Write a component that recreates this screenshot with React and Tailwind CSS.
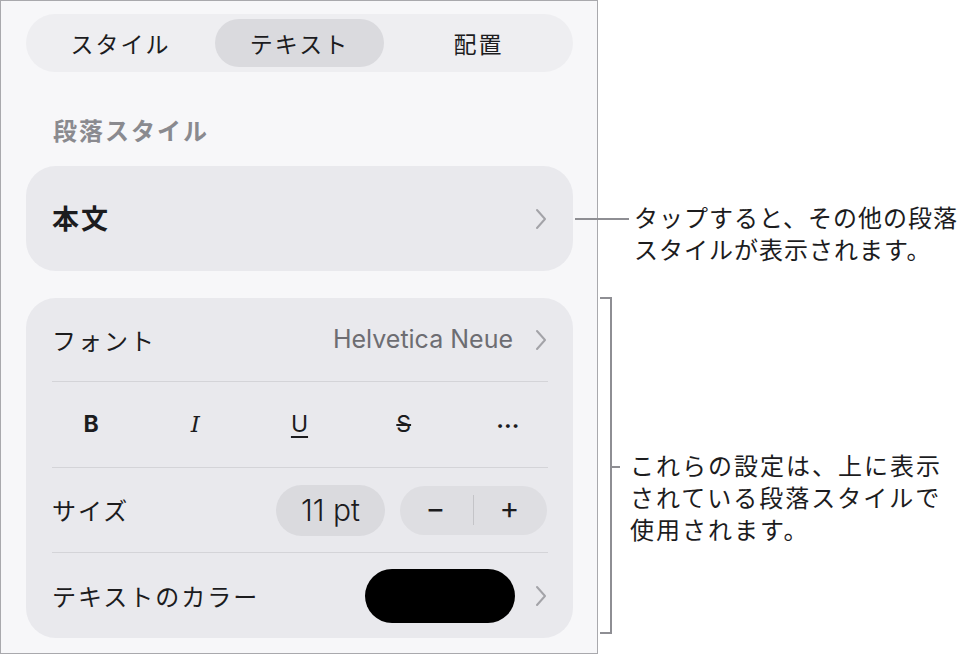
import React from 'react';

const jp = { fontFamily: '"Noto Sans CJK JP", "Noto Sans", sans-serif' };
const latin = { fontFamily: 'Inter, "Noto Sans CJK JP", sans-serif' };

function Chevron() {
  return (
    <svg width="12" height="22" viewBox="0 0 12 22" className="shrink-0">
      <polyline points="2,2 10,11 2,20" fill="none" stroke="#a3a3a8" strokeWidth="2" strokeLinecap="round" strokeLinejoin="round" />
    </svg>
  );
}

function Divider() {
  return <div className="h-px bg-[#d4d4d8] ml-[26px] mr-[25px]" />;
}

export default function App() {
  return (
    <div className="w-[971px] h-[654px] bg-white flex text-[#1c1c1e] overflow-hidden" style={jp}>
      <div className="w-[598px] h-[654px] shrink-0 border border-[#a9a9ad] bg-[#f7f7f9] pl-[25px] pr-[24px] pt-[13px] tracking-[2px]">
        {/* tabs */}
        <div className="h-[58px] rounded-full bg-[#eeeef1] grid grid-cols-3 p-[5px] text-[23px]">
          <div className="flex items-center justify-center">スタイル</div>
          <div className="flex items-center justify-center mx-[5px] rounded-full bg-[#dadade]">テキスト</div>
          <div className="flex items-center justify-center">配置</div>
        </div>

        <div className="mt-[42px] ml-[27px] text-[24px] font-semibold text-[#8a8a8f] leading-[32px]">段落スタイル</div>

        <div className="mt-[20px] h-[105px] rounded-[30px] bg-[#e9e9ed] flex items-center pl-[26px] pr-[26px]">
          <div className="flex-1 text-[27px] font-bold">本文</div>
          <Chevron />
        </div>

        <div className="mt-[27px] h-[340px] rounded-[30px] bg-[#e9e9ed] flex flex-col">
          <div className="h-[83px] flex items-center pl-[26px] pr-[26px]">
            <div className="flex-1 text-[24px]">フォント</div>
            <div className="text-[25px] tracking-normal text-[#6d6d72] mr-[22px]" style={latin}>Helvetica Neue</div>
            <Chevron />
          </div>
          <Divider />
          <div className="h-[85px] grid grid-cols-5 px-[13px] items-center text-[23px] tracking-normal" style={latin}>
            <div className="text-center font-bold">B</div>
            <div className="text-center italic font-light" style={{ fontFamily: '"DejaVu Serif", serif' }}>I</div>
            <div className="text-center underline underline-offset-4">U</div>
            <div className="text-center line-through">S</div>
            <div className="text-center font-bold leading-none pt-1">···</div>
          </div>
          <Divider />
          <div className="h-[84px] flex items-center pl-[26px] pr-[26px]">
            <div className="flex-1 text-[24px]">サイズ</div>
            <div className="w-[109px] h-[51px] rounded-full bg-[#dadade] flex items-center justify-center text-[30px] font-light tracking-normal mr-[15px]" style={latin}>11 pt</div>
            <div className="w-[147px] h-[49px] rounded-full bg-[#dedee2] flex items-center text-[30px]" style={latin}>
              <div className="flex-1 text-center leading-none pb-1">−</div>
              <div className="w-px h-[30px] bg-[#c4c4c8]" />
              <div className="flex-1 text-center leading-none pb-1">+</div>
            </div>
          </div>
          <Divider />
          <div className="h-[85px] flex items-center pl-[26px] pr-[26px]">
            <div className="flex-1 text-[24px]">テキストのカラー</div>
            <div className="w-[150px] h-[54px] rounded-full bg-black mr-[20px]" />
            <Chevron />
          </div>
        </div>
      </div>

      {/* callouts */}
      <div className="flex-1 relative text-[24px] leading-[32px] whitespace-nowrap">
        <div className="absolute left-0 top-[201px] flex items-start tracking-[1px]">
          <div className="w-[54px] h-[2px] bg-[#8e8e93] mt-[17px] mr-[5px] ml-[-23px] shrink-0" />
          <div>
            <div>タップすると、その他の段落</div>
            <div>スタイルが表示されます。</div>
          </div>
        </div>
        <div className="absolute left-[2px] top-[297px] w-[12px] h-[337px] border-t-2 border-r-2 border-b-2 border-[#8e8e93]" />
        <div className="absolute left-[14px] top-[449px] flex items-start tracking-[2px]">
          <div className="w-[8px] h-[2px] bg-[#8e8e93] mt-[17px] mr-[10px] shrink-0" />
          <div>
            <div>これらの設定は、上に表示</div>
            <div>されている段落スタイルで</div>
            <div>使用されます。</div>
          </div>
        </div>
      </div>
    </div>
  );
}
